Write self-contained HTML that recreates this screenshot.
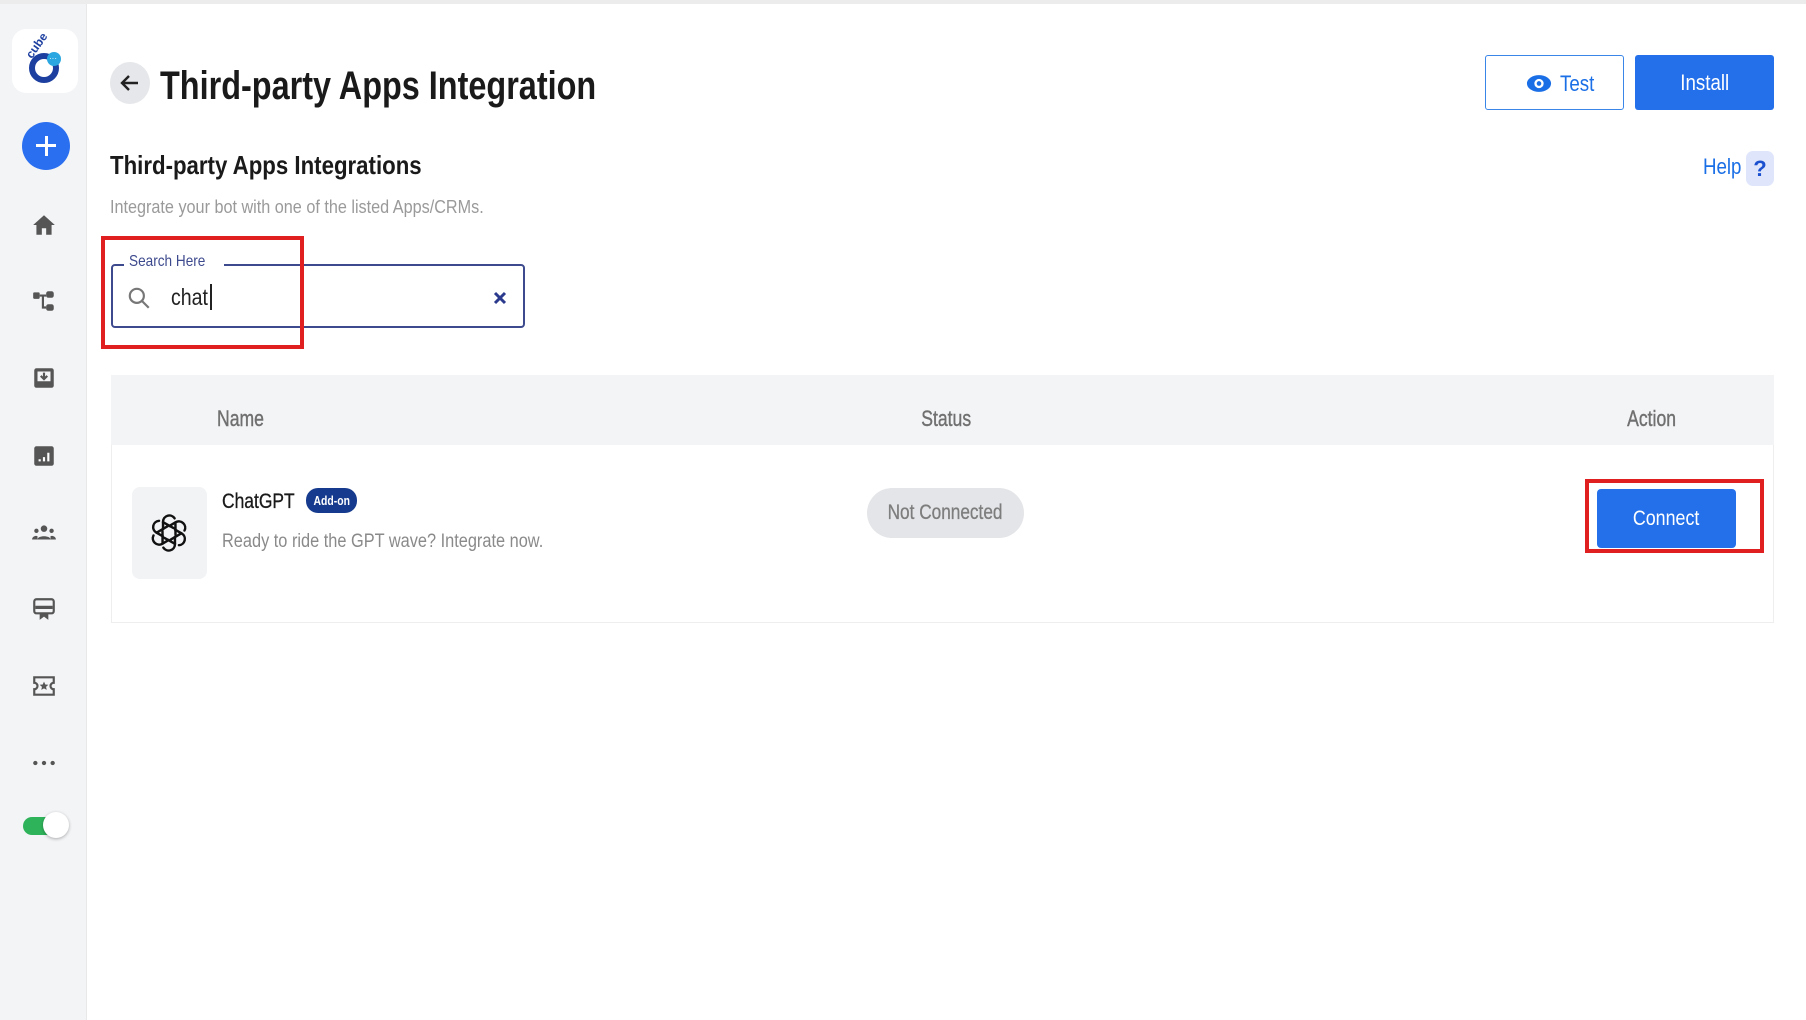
<!DOCTYPE html>
<html><head><meta charset="utf-8"><style>
*{margin:0;padding:0;box-sizing:border-box}
body{width:1806px;height:1020px;overflow:hidden;background:#fff;font-family:"Liberation Sans",sans-serif;position:relative}
.a{position:absolute}
.n{display:inline-block;transform:scaleX(.8);transform-origin:left center;white-space:nowrap}
.c{display:inline-block;transform:scaleX(.8);transform-origin:center;white-space:nowrap}
.ic{position:absolute;left:31px;width:26px;height:26px}
</style></head><body>
<div class="a" style="left:0;top:0;width:1806px;height:4px;background:#ececec"></div>
<div class="a" style="left:0;top:4px;width:87px;height:1016px;background:#f3f4f6;border-right:1px solid #e8e8e8"></div>
<div class="a" style="left:12px;top:29px;width:66px;height:64px;background:#fff;border-radius:14px"></div>
<svg class="a" style="left:20px;top:34px" width="50" height="54" viewBox="0 0 50 54">
<text x="6" y="22" font-family="Liberation Sans" font-weight="bold" font-size="12" fill="#1d3fa0" transform="rotate(-55 12 18)">cube</text>
<circle cx="24" cy="34" r="12" fill="none" stroke="#1d3fa0" stroke-width="6"/>
<circle cx="34" cy="25" r="7" fill="#2aa7e0"/>
<text x="29" y="27" font-size="8" fill="#fff">···</text>
</svg>
<div class="a" style="left:22px;top:122px;width:48px;height:48px;border-radius:50%;background:#2a6ff0"></div>
<div class="a" style="left:36px;top:144px;width:20px;height:3px;background:#fff"></div>
<div class="a" style="left:44.5px;top:136px;width:3px;height:20px;background:#fff"></div>
<svg class="ic" style="top:212px" viewBox="0 0 24 24"><path d="M12 3L2 12h3v9h5v-6h4v6h5v-9h3z" fill="#555"/></svg>
<svg class="ic" style="top:288px" viewBox="0 0 24 24"><rect x="2" y="4" width="6" height="6" rx="1" fill="#555"/><rect x="14" y="3" width="7" height="6" rx="2" fill="#555"/><rect x="14" y="15" width="7" height="6" rx="2" fill="#555"/><path d="M8 7h6M11 7v11h3" stroke="#555" stroke-width="2" fill="none"/></svg>
<svg class="ic" style="top:365px" viewBox="0 0 24 24"><rect x="3" y="3" width="18" height="18" rx="2" fill="#555"/><rect x="6" y="6" width="12" height="9" fill="#f3f4f6"/><path d="M12 7v6M9 10l3 3 3-3" stroke="#555" stroke-width="2" fill="none"/></svg>
<svg class="ic" style="top:443px" viewBox="0 0 24 24"><rect x="3" y="3" width="18" height="18" rx="2" fill="#555"/><path d="M8 17v-2M12 17v-4M16 17v-8" stroke="#fff" stroke-width="2"/></svg>
<svg class="ic" style="top:520px" viewBox="0 0 24 24"><circle cx="12" cy="8" r="3" fill="#555"/><circle cx="5" cy="10" r="2" fill="#555"/><circle cx="19" cy="10" r="2" fill="#555"/><path d="M6 18c0-4 12-4 12 0zM1 18c0-3 4-4 5-3v3zM23 18c0-3-4-4-5-3v3z" fill="#555"/></svg>
<svg class="ic" style="top:596px" viewBox="0 0 24 24"><rect x="3" y="3" width="18" height="13" rx="2" fill="none" stroke="#555" stroke-width="2"/><rect x="4" y="9" width="16" height="3" fill="#555"/><path d="M8 16v6l4-3 4 3v-6z" fill="#555"/></svg>
<svg class="ic" style="top:673px" viewBox="0 0 24 24"><path d="M3 4h18v5a3 3 0 000 6v5H3v-5a3 3 0 000-6z" fill="none" stroke="#555" stroke-width="2"/><path d="M12 8l1.2 2.6 2.8.3-2.1 1.9.6 2.8-2.5-1.4-2.5 1.4.6-2.8-2.1-1.9 2.8-.3z" fill="#555"/></svg>
<svg class="ic" style="top:750px" viewBox="0 0 24 24"><circle cx="4" cy="12" r="2" fill="#555"/><circle cx="12" cy="12" r="2" fill="#555"/><circle cx="20" cy="12" r="2" fill="#555"/></svg>
<div class="a" style="left:23px;top:817px;width:40px;height:18px;border-radius:9px;background:#2fb35a"></div>
<div class="a" style="left:43px;top:812px;width:26px;height:26px;border-radius:50%;background:#fff;box-shadow:0 1px 3px rgba(0,0,0,.3)"></div>

<div class="a" style="left:110px;top:62px;width:40px;height:42px;border-radius:50%;background:#e6e7ea"></div>
<svg class="a" style="left:118px;top:71px" width="24" height="24" viewBox="0 0 24 24"><path d="M20 12H5M11 5l-7 7 7 7" stroke="#222" stroke-width="2.4" fill="none"/></svg>
<div class="a" style="left:160px;top:63px;font-size:40px;font-weight:bold;color:#1a1a1a;line-height:46px"><span class="n" style="transform:scaleX(.81)">Third-party Apps Integration</span></div>

<div class="a" style="left:1485px;top:55px;width:139px;height:55px;border:1.5px solid #3a86e8;border-radius:3px"></div>
<svg class="a" style="left:1526px;top:74px" width="26" height="19" viewBox="0 0 28 20"><ellipse cx="14" cy="10" rx="13" ry="9" fill="#1a6fe6"/><circle cx="14" cy="10" r="5" fill="#fff"/><circle cx="14" cy="10" r="2.5" fill="#1a6fe6"/></svg>
<div class="a" style="left:1560px;top:71px;font-size:22px;color:#1a6fe6;line-height:26px"><span class="n" style="transform:scaleX(.85)">Test</span></div>
<div class="a" style="left:1635px;top:55px;width:139px;height:55px;background:#2370ea;border-radius:3px;color:#fff;font-size:22px;line-height:55px;text-align:center"><span class="c" style="transform:scaleX(.85)">Install</span></div>

<div class="a" style="left:110px;top:150px;font-size:26px;font-weight:bold;color:#1a1a1a;line-height:30px"><span class="n" style="transform:scaleX(.855)">Third-party Apps Integrations</span></div>
<div class="a" style="left:1703px;top:154px;font-size:22px;color:#1a6fe6;line-height:26px"><span class="n" style="transform:scaleX(.85)">Help</span></div>
<div class="a" style="left:1746px;top:151px;width:28px;height:35px;border-radius:7px;background:#dfe6fb;color:#1a4fd0;font-size:22px;font-weight:bold;text-align:center;line-height:35px">?</div>
<div class="a" style="left:110px;top:196px;font-size:18px;color:#9a9a9a;line-height:22px"><span class="n" style="transform:scaleX(.9)">Integrate your bot with one of the listed Apps/CRMs.</span></div>

<div class="a" style="left:111px;top:264px;width:414px;height:64px;border:2px solid #3e4a8e;border-radius:4px"></div>
<div class="a" style="left:124px;top:251px;background:#fff;padding:0 5px;font-size:16px;color:#3e4a8e;line-height:22px"><span class="n" style="transform:scaleX(.85)">Search Here</span></div>
<svg class="a" style="left:126px;top:285px" width="26" height="26" viewBox="0 0 24 24"><circle cx="10" cy="10" r="6.5" stroke="#777" stroke-width="2" fill="none"/><path d="M15 15l6 6" stroke="#777" stroke-width="2"/></svg>
<div class="a" style="left:171px;top:283px;font-size:23px;color:#222;line-height:28px"><span class="n" style="transform:scaleX(.85)">chat</span></div>
<div class="a" style="left:210px;top:284px;width:1.5px;height:26px;background:#222"></div>
<svg class="a" style="left:492px;top:290px" width="16" height="16" viewBox="0 0 16 16"><path d="M3 3l10 10M13 3L3 13" stroke="#2b3a8c" stroke-width="3"/></svg>
<div class="a" style="left:101px;top:236px;width:203px;height:113px;border:4px solid #e02020"></div>

<div class="a" style="left:111px;top:375px;width:1663px;height:70px;background:#f3f4f6"></div>
<div class="a" style="left:111px;top:445px;width:1663px;height:178px;border:1px solid #eee;border-top:none"></div>
<div class="a" style="left:217px;top:407px;font-size:22px;color:#707070;line-height:24px;-webkit-text-stroke:0.4px #707070"><span class="n" style="transform:scaleX(.8)">Name</span></div>
<div class="a" style="left:846px;top:407px;width:200px;text-align:center;font-size:22px;color:#707070;line-height:24px;-webkit-text-stroke:0.4px #707070"><span class="c" style="transform:scaleX(.8)">Status</span></div>
<div class="a" style="left:1552px;top:407px;width:200px;text-align:center;font-size:22px;color:#707070;line-height:24px;-webkit-text-stroke:0.4px #707070"><span class="c" style="transform:scaleX(.8)">Action</span></div>

<div class="a" style="left:132px;top:487px;width:75px;height:92px;background:#f2f3f5;border-radius:8px"></div>
<svg class="a" style="left:148px;top:512px" width="42" height="42" viewBox="0 0 24 24" fill="none" stroke="#111" stroke-width="1.4" stroke-linecap="round">
<g id="p"><path d="M8.6 9.9V5.6a3.6 3.6 0 016.6-2"/></g>
<g transform="rotate(60 12 12)"><path d="M8.6 9.9V5.6a3.6 3.6 0 016.6-2"/></g>
<g transform="rotate(120 12 12)"><path d="M8.6 9.9V5.6a3.6 3.6 0 016.6-2"/></g>
<g transform="rotate(180 12 12)"><path d="M8.6 9.9V5.6a3.6 3.6 0 016.6-2"/></g>
<g transform="rotate(240 12 12)"><path d="M8.6 9.9V5.6a3.6 3.6 0 016.6-2"/></g>
<g transform="rotate(300 12 12)"><path d="M8.6 9.9V5.6a3.6 3.6 0 016.6-2"/></g>
<g transform="rotate(0 12 12)"><path d="M8.6 5.8l6 3.4"/></g>
<g transform="rotate(60 12 12)"><path d="M8.6 5.8l6 3.4"/></g>
<g transform="rotate(120 12 12)"><path d="M8.6 5.8l6 3.4"/></g>
<g transform="rotate(180 12 12)"><path d="M8.6 5.8l6 3.4"/></g>
<g transform="rotate(240 12 12)"><path d="M8.6 5.8l6 3.4"/></g>
<g transform="rotate(300 12 12)"><path d="M8.6 5.8l6 3.4"/></g>
</svg>
<div class="a" style="left:222px;top:490px;font-size:21px;color:#1a1a1a;line-height:24px;-webkit-text-stroke:0.3px #1a1a1a"><span class="n" style="transform:scaleX(.83)">ChatGPT</span></div>
<div class="a" style="left:306px;top:488px;width:51px;height:25px;border-radius:12px;background:#163b8e;color:#fff;font-size:13px;font-weight:bold;text-align:center;line-height:25px"><span class="c" style="transform:scaleX(.8)">Add-on</span></div>
<div class="a" style="left:222px;top:530px;font-size:19px;color:#8a8a8a;line-height:24px"><span class="n" style="transform:scaleX(.86)">Ready to ride the GPT wave? Integrate now.</span></div>

<div class="a" style="left:867px;top:488px;width:157px;height:50px;border-radius:25px;background:#e4e5e8;color:#7d7d7d;font-size:21px;text-align:center;line-height:50px;-webkit-text-stroke:0.3px #7d7d7d"><span class="c" style="transform:scaleX(.82)">Not Connected</span></div>

<div class="a" style="left:1597px;top:489px;width:139px;height:59px;background:#2370ea;border-radius:4px;color:#fff;font-size:21px;text-align:center;line-height:59px"><span class="c" style="transform:scaleX(.85)">Connect</span></div>
<div class="a" style="left:1585px;top:479px;width:179px;height:74px;border:4px solid #e02020"></div>
</body></html>
